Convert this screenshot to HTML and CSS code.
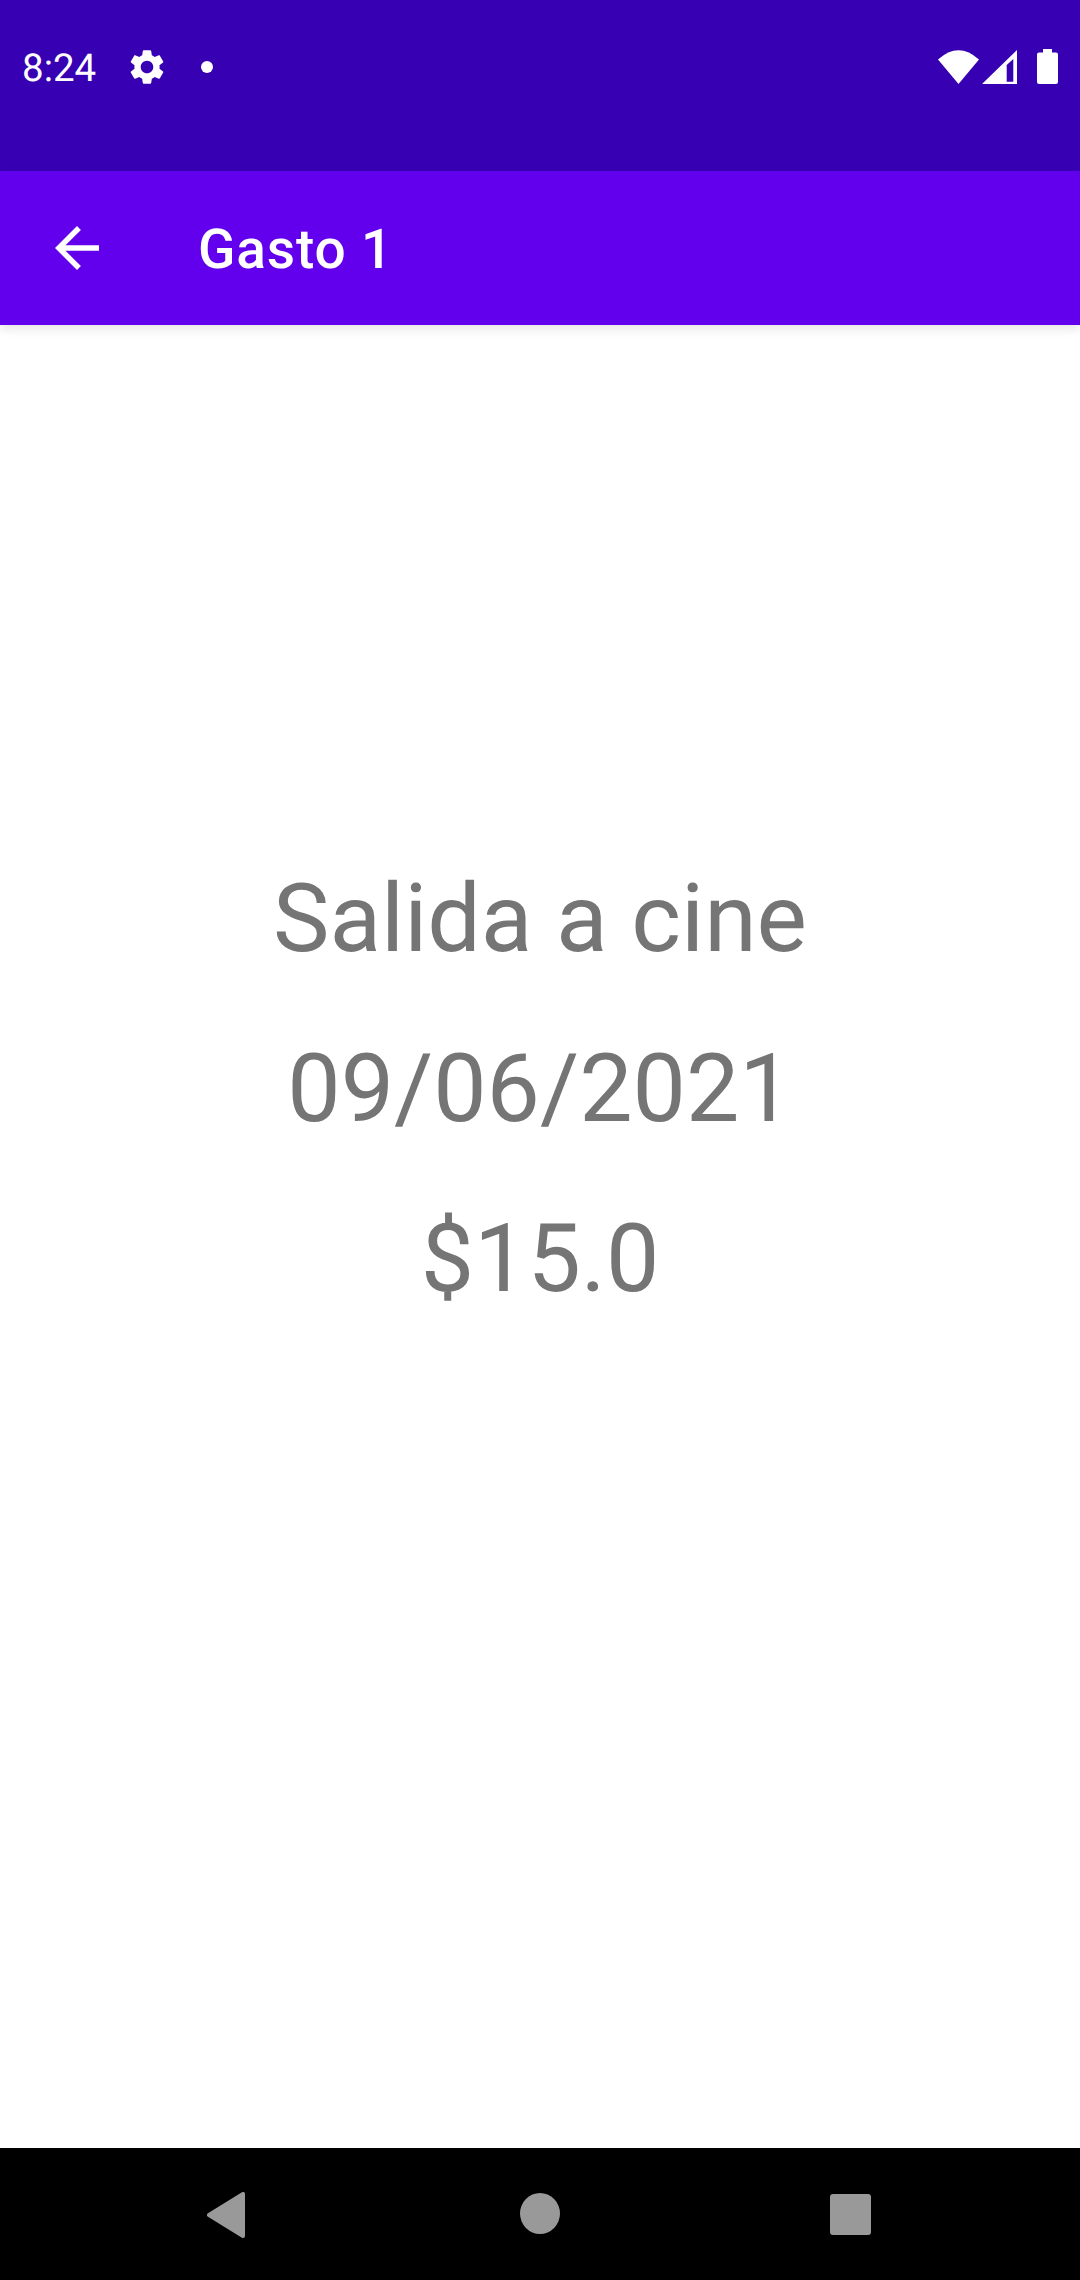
FILE: index.html
```html
<!DOCTYPE html>
<html lang="es">
<head>
<meta charset="utf-8">
<title>Gasto 1</title>
<link rel="stylesheet" href="styles.css">
</head>
<body>
<div class="screen">
  <header class="status-bar">
    <span class="time">8:24</span>
    <svg class="gear" viewBox="0 0 24 24"><path fill="#fff" d="M19.14 12.94c.04-.3.06-.61.06-.94 0-.32-.02-.64-.07-.94l2.03-1.58c.18-.14.23-.41.12-.61l-1.92-3.32c-.12-.22-.37-.29-.59-.22l-2.39.96c-.5-.38-1.03-.7-1.62-.94l-.36-2.54c-.04-.24-.24-.41-.48-.41h-3.84c-.24 0-.43.17-.47.41l-.36 2.54c-.59.24-1.13.57-1.62.94l-2.39-.96c-.22-.08-.47 0-.59.22L2.74 8.87c-.12.21-.08.47.12.61l2.03 1.58c-.05.3-.09.63-.09.94s.02.64.07.94l-2.03 1.58c-.18.14-.23.41-.12.61l1.92 3.32c.12.22.37.29.59.22l2.39-.96c.5.38 1.03.7 1.62.94l.36 2.54c.05.24.24.41.48.41h3.84c.24 0 .44-.17.47-.41l.36-2.54c.59-.24 1.13-.56 1.62-.94l2.39.96c.22.08.47 0 .59-.22l1.92-3.32c.12-.22.07-.47-.12-.61l-2.01-1.58zM12 15.6c-1.98 0-3.6-1.62-3.6-3.6s1.62-3.6 3.6-3.6 3.6 1.62 3.6 3.6-1.62 3.6-3.6 3.6z"/></svg>
    <span class="dot"></span>
    <div class="status-right">
      <svg class="wifi" viewBox="0 0 41 34"><path fill="#fff" d="M0 9.5Q20.5-9 41 9.5L20.5 34Z"/></svg>
      <svg class="signal" viewBox="0 0 35 34"><path fill="#fff" fill-rule="evenodd" d="M0 34 35 0V34ZM24.7 15V31.7H31.3V9Z"/></svg>
      <svg class="battery" viewBox="0 0 21 35"><path fill="#fff" d="M6 0H15V3.5H19A2 2 0 0 1 21 5.5V33A2 2 0 0 1 19 35H2A2 2 0 0 1 0 33V5.5A2 2 0 0 1 2 3.5H6Z"/></svg>
    </div>
  </header>
  <div class="toolbar">
    <svg class="back" viewBox="0 0 24 24"><path fill="#fff" d="M20 11H7.83l5.59-5.59L12 4l-8 8 8 8 1.41-1.41L7.83 13H20v-2z"/></svg>
    <h1 class="title">Gasto 1</h1>
  </div>
  <main class="content">
    <p class="line">Salida a cine</p>
    <p class="line">09/06/2021</p>
    <p class="line">$15.0</p>
  </main>
  <nav class="nav-bar">
    <svg class="nav-back" viewBox="0 0 38 46"><path fill="#999" stroke="#999" stroke-width="4" stroke-linejoin="round" d="M2 23 36 2V44Z"/></svg>
    <span class="nav-home"></span>
    <span class="nav-recent"></span>
  </nav>
</div>
</body>
</html>
```

FILE: styles.css
```css
* {
  box-sizing: border-box;
}

html,
body {
  margin: 0;
  padding: 0;
  background: #fff;
}

.screen {
  width: 1080px;
  height: 2280px;
  display: flex;
  flex-direction: column;
  overflow: hidden;
  font-family: Roboto, "Liberation Sans", sans-serif;
  text-rendering: geometricPrecision;
}

.status-bar {
  flex: none;
  height: 171px;
  background: #3700b3;
  display: flex;
  align-items: flex-start;
  padding: 46px 22px 0 22px;
  color: #fff;
}

.time {
  font-size: 38.5px;
  line-height: 45px;
  width: 74px;
}

.gear {
  width: 42px;
  height: 42px;
  margin-left: 29.5px;
}

.dot {
  width: 12px;
  height: 12px;
  border-radius: 50%;
  background: #fff;
  margin: 15px 0 0 33.5px;
}

.status-right {
  margin-left: auto;
  display: flex;
  align-items: flex-start;
  margin-top: 3px;
}

.wifi {
  width: 41px;
  height: 34px;
  margin-top: 1px;
}

.signal {
  width: 35px;
  height: 34px;
  margin: 1px 0 0 3px;
}

.battery {
  width: 21px;
  height: 35px;
  margin-left: 20px;
}

.toolbar {
  flex: none;
  height: 154px;
  background: #6200ee;
  display: flex;
  align-items: center;
  padding-left: 44px;
  color: #fff;
  box-shadow: 0 4px 10px rgba(0, 0, 0, 0.1);
  position: relative;
}

.back {
  width: 66px;
  height: 66px;
}

.title {
  margin: 3px 0 0 88px;
  font-size: 55px;
  font-weight: 500;
  line-height: 64px;
  letter-spacing: 0.85px;
}

.content {
  flex: 1;
  padding-top: 510px;
  background: #fff;
}

.line {
  margin: 0;
  text-align: center;
  font-size: 95px;
  line-height: 170px;
  color: #757575;
}

.nav-bar {
  flex: none;
  height: 132px;
  background: #000;
  display: flex;
  align-items: flex-start;
  padding: 44px 0 0 207px;
}

.nav-back {
  width: 38px;
  height: 46px;
}

.nav-home {
  width: 40px;
  height: 41px;
  border-radius: 50%;
  background: #999;
  margin-left: 275px;
  margin-top: 1px;
}

.nav-recent {
  width: 41px;
  height: 41px;
  border-radius: 3px;
  background: #999;
  margin-left: 270px;
  margin-top: 2px;
}
```
